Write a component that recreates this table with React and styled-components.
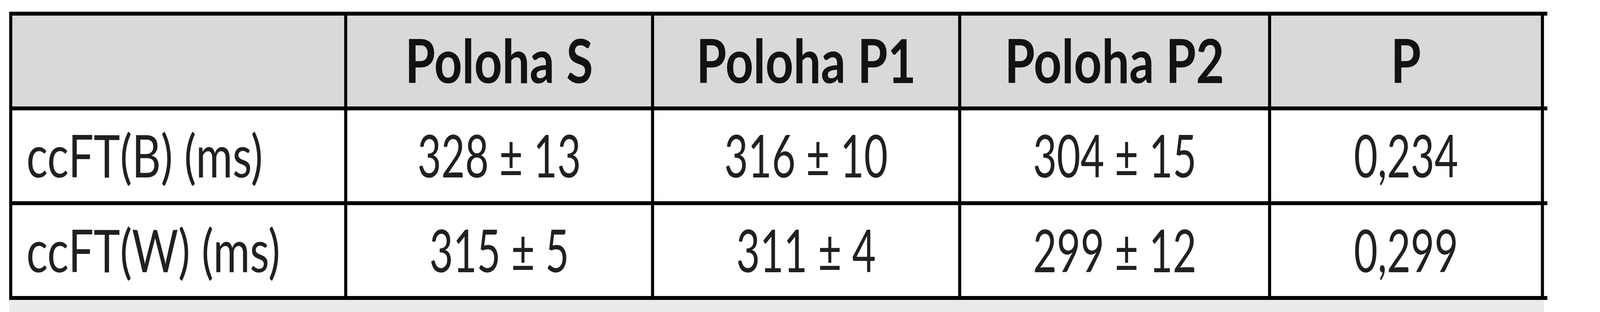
import React, { useState } from "react";
import styled, { createGlobalStyle } from "styled-components";

const DESIGN_WIDTH = 5225;

const GlobalStyle = createGlobalStyle`
  html, body {
    margin: 0;
    padding: 0;
    background: #ffffff;
    overflow: hidden;
  }
  body {
    font-family: Lato, "Open Sans", sans-serif;
    color: #231f20;
  }
`;

const columns = [1084, 992, 993, 1002, 881];

const head = ["", "Poloha S", "Poloha P1", "Poloha P2", "P"];

const rows = [
  ["ccFT(B) (ms)", "328 ± 13", "316 ± 10", "304 ± 15", "0,234"],
  ["ccFT(W) (ms)", "315 ± 5", "311 ± 4", "299 ± 12", "0,299"],
];

const Page = styled.div`
  width: ${DESIGN_WIDTH}px;
  height: 800px;
  padding: 30px 0 0 30px;
  box-sizing: border-box;
  transform-origin: 0 0;
`;

const Table = styled.div`
  width: 5023px;
  display: flex;
  flex-direction: column;
`;

const Row = styled.div`
  display: flex;
  height: 233px;
  border-top: 10px solid #000;
  border-bottom: ${(p) => (p.$last ? "10px solid #000" : "0")};
`;

const Cell = styled.div`
  flex: 0 0 auto;
  width: ${(p) => p.$w}px;
  border-left: 10px solid #000;
  border-right: ${(p) => (p.$end ? "10px solid #000" : "0")};
  background: ${(p) => (p.$head ? "#d9d9d9" : "#ffffff")};
  display: flex;
  align-items: center;
  justify-content: ${(p) => (p.$left ? "flex-start" : "center")};
  padding-left: ${(p) => (p.$left ? "46px" : "0")};
  font-size: ${(p) => (p.$head ? "156px" : "152px")};
  font-weight: ${(p) => (p.$head ? 700 : 400)};
  color: ${(p) => (p.$head ? "#121212" : "#231f20")};
  line-height: 1;
  white-space: nowrap;
`;

const Label = styled.span`
  display: block;
  transform-origin: ${(p) => (p.$left ? "0 50%" : "50% 50%")};
  transform: translateY(-4px) scaleX(${(p) => p.$sx || 1});
`;

const Strip = styled.div`
  width: 5012px;
  height: 31px;
  background: #ebebeb;
`;

export default function App() {
  const [k] = useState(() =>
    typeof window === "undefined" ? 1 : Math.min(1, window.innerWidth / DESIGN_WIDTH)
  );

  return (
    <>
      <GlobalStyle />
      <Page style={{ transform: `scaleX(${k})` }}>
        <Table>
          <Row>
            {head.map((h, i) => (
              <Cell key={i} $head $w={columns[i]} $end={i === head.length - 1}>
                <Label $sx={1.02}>{h}</Label>
              </Cell>
            ))}
          </Row>
          {rows.map((r, ri) => (
            <Row key={ri} $last={ri === rows.length - 1}>
              {r.map((v, i) => (
                <Cell
                  key={i}
                  $w={i === 0 ? columns[i] - 46 : columns[i]}
                  $left={i === 0}
                  $end={i === r.length - 1}
                >
                  <Label $left={i === 0} $sx={i === 0 ? 0.96 : 0.88}>
                    {v}
                  </Label>
                </Cell>
              ))}
            </Row>
          ))}
        </Table>
        <Strip />
      </Page>
    </>
  );
}
